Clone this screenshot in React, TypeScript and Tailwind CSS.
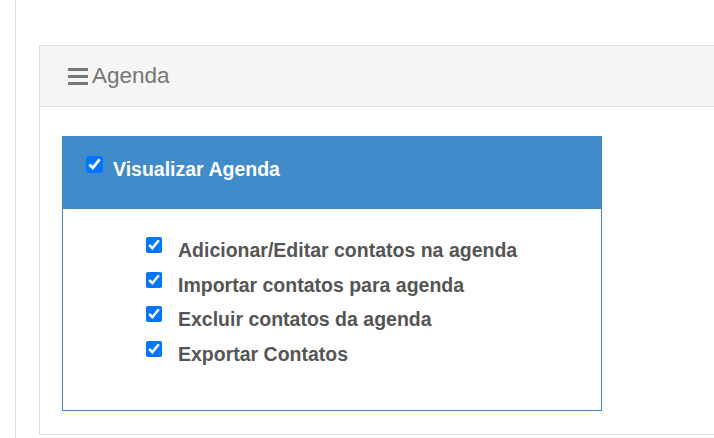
import React from "react";

const items = [
  "Adicionar/Editar contatos na agenda",
  "Importar contatos para agenda",
  "Excluir contatos da agenda",
  "Exportar Contatos",
];

const BarsIcon = () => (
  <svg width="20" height="18" viewBox="0 0 20 18" className="shrink-0">
    <rect x="0" y="1" width="20" height="3" rx="0.5" fill="#777" />
    <rect x="0" y="8" width="20" height="3" rx="0.5" fill="#777" />
    <rect x="0" y="15" width="20" height="3" rx="0.5" fill="#777" />
  </svg>
);

const App: React.FC = () => {
  return (
    <div
      className="h-[438px] w-[714px] overflow-hidden bg-white pl-[15px]"
      style={{fontFamily: '"Liberation Sans", Arial, sans-serif'}}
    >
      <div className="h-full border-l border-[#ddd] pl-[23px] pt-[45px]">
        <div className="w-[720px] border border-[#ddd] bg-white">
          {/* Header */}
          <div className="flex h-[61px] items-center gap-1 border-b border-[#ddd] bg-[#f5f5f5] pl-[28px]">
            <BarsIcon />
            <span className="text-[22.5px] leading-none text-[#777]">Agenda</span>
          </div>

          {/* Body */}
          <div className="pb-[23px] pl-[22px] pt-[29px]">
            <div className="w-[540px] border border-[#428bca]">
              <div className="flex h-[72px] items-start gap-[10px] bg-[#428bca] pl-[23px] pt-[19px]">
                <input
                  type="checkbox"
                  defaultChecked
                  className="m-0 h-[17px] w-[17px] accent-[#0075ff]"
                />
                <span className="mt-[2px] text-[19.5px] font-bold leading-[22px] text-white">
                  Visualizar Agenda
                </span>
              </div>
              <div className="h-[201px] pl-[83px] pt-[28px]">
                {items.map((item) => (
                  <label
                    key={item}
                    className="flex h-[34.7px] items-start gap-[16px]"
                  >
                    <input
                      type="checkbox"
                      defaultChecked
                      className="m-0 h-[16px] w-[16px] accent-[#0075ff]"
                    />
                    <span className="mt-[2px] text-[19.5px] font-bold leading-[22px] text-[#555]">
                      {item}
                    </span>
                  </label>
                ))}
              </div>
            </div>
          </div>
        </div>
      </div>
    </div>
  );
};

export default App;
